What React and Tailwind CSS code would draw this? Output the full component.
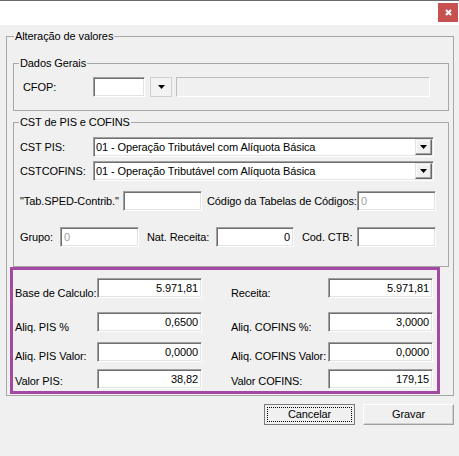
const sunken =
  "flex items-center h-[20px] border border-t-[#a0a0a0] border-l-[#a0a0a0] border-r-white border-b-white shadow-[inset_1px_1px_0_#707070,inset_-1px_-1px_0_#e3e3e3]";

function Caret() {
  return (
    <svg width="7" height="4" viewBox="0 0 7 4">
      <polygon points="0,0 7,0 3.5,4" fill="#000" />
    </svg>
  );
}

function Field({ value = "", right, muted, className = "" }) {
  return (
    <div
      className={`${sunken} bg-white px-[3px] ${right ? "justify-end" : ""} ${
        muted ? "text-[#a0a0a0]" : "text-black"
      } ${className}`}
    >
      {value}
    </div>
  );
}

function Combo({ value, className = "" }) {
  return (
    <div className={`${sunken} bg-white ${className}`}>
      <span className="flex-1 pl-[2px] whitespace-nowrap overflow-hidden">{value}</span>
      <div className="mr-px flex h-[16px] w-[17px] items-center justify-center border border-t-[#e3e3e3] border-l-[#e3e3e3] border-r-[#696969] border-b-[#696969] bg-[#f0f0f0] shadow-[inset_-1px_-1px_0_#a0a0a0,inset_1px_1px_0_#fff]">
        <Caret />
      </div>
    </div>
  );
}

function Group({ title, className = "", children }) {
  return (
    <fieldset className={`border border-[#a7a7a7] ${className}`}>
      <legend className="ml-[5px] px-px leading-[13px]">{title}</legend>
      {children}
    </fieldset>
  );
}

function ValueRow({ top, leftLabel, leftValue, rightLabel, rightValue, labelPad }) {
  return (
    <div className={`flex h-[20px] items-start ${top}`}>
      <span className={`w-[82px] shrink-0 whitespace-nowrap ${labelPad}`}>{leftLabel}</span>
      <Field value={leftValue} right className="w-[105px]" />
      <span className={`ml-[29px] w-[97px] shrink-0 whitespace-nowrap ${labelPad}`}>{rightLabel}</span>
      <Field value={rightValue} right className="w-[105px]" />
    </div>
  );
}

export default function App() {
  return (
    <div className="flex h-[456px] w-[459px] flex-col overflow-hidden bg-[#f0f0f0] font-['Liberation_Sans',Arial,sans-serif] text-[11px] leading-[13px] tracking-[-0.1px] text-black">
      {/* Title bar */}
      <div className="flex h-[25px] shrink-0 items-start justify-end border-t border-[#6a6a6a] bg-white pt-[2px] pr-px">
        <button className="flex h-[19px] w-[20px] items-center justify-center bg-[#c75050]">
          <svg width="7" height="7" viewBox="0 0 7 7">
            <path d="M1 1L6 6M6 1L1 6" stroke="#fff" strokeWidth="2" />
          </svg>
        </button>
      </div>

      {/* Alteração de valores */}
      <fieldset className="ml-[6px] mt-[5px] w-[448px] border border-[#a7a7a7]">
        <legend className="ml-[7px] px-px leading-[13px]">Alteração de valores</legend>

        <Group title="Dados Gerais" className="ml-[6px] mt-[14px] w-[436px]">
          <div className="mt-[7px] mb-[13px] flex items-center pl-[9px]">
            <span className="w-[70px] shrink-0">CFOP:</span>
            <Field className="w-[52px]" />
            <div className="ml-[5px] flex h-[20px] w-[22px] items-center justify-center border border-[#cfcfcf] bg-[#f3f3f3]">
              <Caret />
            </div>
            <div className="ml-[4px] h-[20px] w-[254px] border border-t-[#bdbdbd] border-l-[#bdbdbd] border-r-white border-b-white" />
          </div>
        </Group>

        <Group title="CST de PIS e COFINS" className="ml-[6px] mt-[5px] w-[436px]">
          <div className="mt-[8px] mb-[19px] flex flex-col pl-[6px]">
            <div className="flex items-center">
              <span className="w-[73px] shrink-0">CST PIS:</span>
              <Combo value="01 - Operação Tributável com Alíquota Básica" className="w-[341px]" />
            </div>
            <div className="mt-[4px] flex items-center">
              <span className="w-[73px] shrink-0">CSTCOFINS:</span>
              <Combo value="01 - Operação Tributável com Alíquota Básica" className="w-[341px]" />
            </div>
            <div className="mt-[10px] flex items-center">
              <span className="w-[103px] shrink-0 whitespace-nowrap">"Tab.SPED-Contrib."</span>
              <Field className="w-[79px]" />
              <span className="ml-[5px] w-[150px] shrink-0 whitespace-nowrap">Código da Tabelas de Códigos:</span>
              <Field value="0" muted className="w-[79px]" />
            </div>
            <div className="mt-[16px] flex items-center">
              <span className="w-[40px] shrink-0">Grupo:</span>
              <Field value="0" muted className="w-[79px]" />
              <span className="ml-[8px] w-[69px] shrink-0 whitespace-nowrap">Nat. Receita:</span>
              <Field value="0" right className="w-[78px]" />
              <span className="ml-[8px] w-[55px] shrink-0 whitespace-nowrap">Cod. CTB:</span>
              <Field className="w-[79px]" />
            </div>
          </div>
        </Group>

        {/* Totais */}
        <div className="mb-px ml-[3px] flex h-[127px] w-[430px] flex-col border-[3px] border-[#a349a4] pl-[2px]">
          <ValueRow top="mt-[8px]" labelPad="pt-[9px]" leftLabel="Base de Calculo:" leftValue="5.971,81" rightLabel="Receita:" rightValue="5.971,81" />
          <ValueRow top="mt-[14px]" labelPad="pt-[9px]" leftLabel="Aliq. PIS %" leftValue="0,6500" rightLabel="Aliq. COFINS %:" rightValue="3,0000" />
          <ValueRow top="mt-[10px]" labelPad="pt-[8px]" leftLabel="Aliq. PIS Valor:" leftValue="0,0000" rightLabel="Aliq. COFINS Valor:" rightValue="0,0000" />
          <ValueRow top="mt-[7px]" labelPad="pt-[6px]" leftLabel="Valor PIS:" leftValue="38,82" rightLabel="Valor COFINS:" rightValue="179,15" />
        </div>
      </fieldset>

      {/* Ações */}
      <div className="mt-[8px] flex justify-end gap-[8px] pr-[5px]">
        <button className="flex h-[21px] w-[91px] items-center justify-center border border-[#7a7a7a] bg-[#f0f0f0] p-[3px]">
          <span className="flex h-full w-full items-center justify-center outline outline-1 outline-dotted outline-black">
            Cancelar
          </span>
        </button>
        <button className="flex h-[21px] w-[91px] items-center justify-center border border-t-white border-l-white border-r-[#a0a0a0] border-b-[#a0a0a0] bg-[#f0f0f0] shadow-[inset_-1px_-1px_0_#d0d0d0]">
          Gravar
        </button>
      </div>
    </div>
  );
}
